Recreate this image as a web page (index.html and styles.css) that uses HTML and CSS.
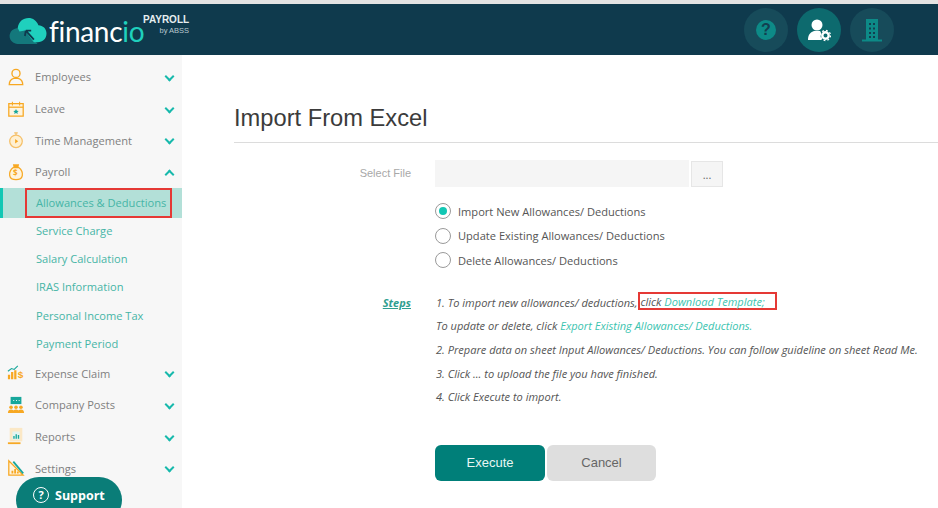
FILE: index.html
```html
<!DOCTYPE html>
<html lang="en">
<head>
    <meta charset="UTF-8">
    <title>Import From Excel</title>
    <link rel="stylesheet" href="styles.css">
</head>
<body>
    <!-- Header -->
    <header class="topbar">
        <div class="brand">
            <svg class="brand-cloud" width="39" height="27" viewBox="0 0 42 30">
                <path d="M11 29C4 29 0 25 0 20c0-5 4-9 10-9 5 0 9 2 13 7l8 11z" fill="#14787c"/>
                <path d="M9 11C10 4 15 0 21 0c5 0 9 3 11 8 5 0 9 4 9 9 0 6-4 10-10 10h-4L17 14l-6 1z" fill="#1fd0bd"/>
                <path d="M27 24 18 14M18 14l-1 6M18 14l6 0" stroke="#0f3a4d" stroke-width="2" fill="none"/>
            </svg>
            <span class="brand-name">financ<span>io</span></span>
            <div class="brand-sub"><strong>PAYROLL</strong><small>by ABSS</small></div>
        </div>
        <div class="top-icons">
            <div class="circle">
                <span class="help-badge">?</span>
            </div>
            <div class="circle active">
                <svg width="24" height="24" viewBox="0 0 24 24">
                    <circle cx="10" cy="7" r="5.5" fill="#fff"/>
                    <path d="M1 22c0-6 3-8 6-9h6c1 1 1 2 1 3-1 2 0 5 1 6z" fill="#fff"/>
                    <circle cx="18.5" cy="17.5" r="3.2" fill="none" stroke="#fff" stroke-width="2.4"/>
                    <circle cx="18.5" cy="17.5" r="5" fill="none" stroke="#fff" stroke-width="1.4" stroke-dasharray="1.8 2.1"/>
                </svg>
            </div>
            <div class="circle">
                <svg width="22" height="24" viewBox="0 0 22 24">
                    <path d="M5 1h12v21H5z" fill="#0d8a87"/>
                    <path d="M1 22.5h20" stroke="#0d8a87" stroke-width="2"/>
                    <path d="M8 5h2v2H8zM12 5h2v2h-2zM8 9.500h2v2H8zM12 9.500h2v2h-2zM8 14h2v2H8zM12 14h2v2h-2zM8 18h2v2H8zM12 18h2v2h-2z" fill="#123f50"/>
                </svg>
            </div>
        </div>
    </header>

    <div class="page">
        <!-- Sidebar -->
        <aside class="sidebar">
            <a class="menu-item">
                <svg class="menu-icon" viewBox="0 0 20 20"><circle cx="10" cy="6" r="4.500" fill="none" stroke="#f7a823" stroke-width="1.500"/><path d="M2.500 18.500c0-4 2-6 5-7h5c3 1 5 3 5 7z" fill="none" stroke="#f7a823" stroke-width="1.500"/></svg>
                <span>Employees</span><i class="chev"></i>
            </a>
            <a class="menu-item">
                <svg class="menu-icon" viewBox="0 0 20 20"><path d="M2 4h16v14H2z" fill="#fff4de" stroke="#f7a823" stroke-width="1.400"/><path d="M2 8h16" stroke="#f7a823" stroke-width="1.400"/><path d="M6 2v4M14 2v4" stroke="#f7a823" stroke-width="1.200"/><path d="M10 10l1 2 2 .2-1.500 1.300.5 2-2-1-2 1 .5-2L7 12.200l2-.2z" fill="#17a79b"/></svg>
                <span>Leave</span><i class="chev"></i>
            </a>
            <a class="menu-item">
                <svg class="menu-icon" viewBox="0 0 20 20"><circle cx="10" cy="11.500" r="7" fill="#fff0d2" stroke="#f5c069" stroke-width="1.400"/><path d="M8 2h4M10 2v2.500" stroke="#f5c069" stroke-width="1.500"/><path d="M9 9l3.500 2.500L9 14z" fill="#f7a823"/></svg>
                <span>Time Management</span><i class="chev"></i>
            </a>
            <a class="menu-item">
                <svg class="menu-icon" viewBox="0 0 20 20"><path d="M7 5C3 8 2.500 11 3 14c.5 3 3 4.500 7 4.500s6.500-1.500 7-4.500c.5-3 0-6-4-9z" fill="#fff4de" stroke="#f7a823" stroke-width="1.400"/><path d="M6.500 1.500h7L12.500 5h-5z" fill="#f7a823"/></svg>
                <b class="dollar">$</b>
                <span>Payroll</span><i class="chev up"></i>
            </a>
            <div class="sub-item current"><span class="marked">Allowances &amp; Deductions</span></div>
            <a class="sub-item">Service Charge</a>
            <a class="sub-item">Salary Calculation</a>
            <a class="sub-item">IRAS Information</a>
            <a class="sub-item">Personal Income Tax</a>
            <a class="sub-item">Payment Period</a>
            <a class="menu-item">
                <svg class="menu-icon" viewBox="0 0 20 20"><path d="M1 17h2.500v-5H1zM4.500 17H7V9H4.500zM8 17h2.500V7H8z" fill="#f7a823"/><path d="M1 8l4-3 3 1 4-4" stroke="#17a79b" stroke-width="1.200" fill="none"/><text x="12" y="16" class="icon-dollar">$</text></svg>
                <span>Expense Claim</span><i class="chev"></i>
            </a>
            <a class="menu-item">
                <svg class="menu-icon" viewBox="0 0 20 20"><path d="M4 1h12v8H4z" fill="#17a79b"/><path d="M7 5h1M10 5h1M13 5h1" stroke="#fff" stroke-width="1.200"/><circle cx="4.500" cy="12.500" r="2" fill="#f7a823"/><circle cx="10" cy="12.500" r="2" fill="#f7a823"/><circle cx="15.500" cy="12.500" r="2" fill="#f7a823"/><path d="M1 19c0-3 1.500-4 3.500-4S8 16 8 19zM6.500 19c0-3 1.500-4 3.500-4s3.500 1 3.500 4zM12 19c0-3 1.500-4 3.500-4s3.500 1 3.500 4z" fill="#f7a823"/></svg>
                <span>Company Posts</span><i class="chev"></i>
            </a>
            <a class="menu-item">
                <svg class="menu-icon" viewBox="0 0 20 20"><path d="M3 1h14v15H3z" fill="#fbe8c6"/><path d="M6 5h8v9H6z" fill="#e3f4f1"/><path d="M7 13v-3h1.500v3zM9.500 13V8H11v5zM12 13v-4h1.500v4z" fill="#17a79b"/><path d="M1 17h14v2H1z" fill="#f7a823"/></svg>
                <span>Reports</span><i class="chev"></i>
            </a>
            <a class="menu-item">
                <svg class="menu-icon" viewBox="0 0 20 20"><path d="M2 2v16h16z" fill="#fff4de" stroke="#f7a823" stroke-width="1.400"/><path d="M5 16v-3h2v3zM8 16v-5h2v5zM11 16v-2h2v2z" fill="#f7a823"/><path d="M7 3l11 13" stroke="#17a79b" stroke-width="2"/></svg>
                <span>Settings</span><i class="chev"></i>
            </a>
            <div class="support">
                <span class="support-icon">?</span>
                Support
            </div>
        </aside>

        <!-- Content -->
        <main class="content">
            <h1>Import From Excel</h1>
            <div class="form-row file-row">
                <label>Select File</label>
                <div class="file-box"></div>
                <button class="browse">...</button>
            </div>
            <div class="radios">
                <div class="radio-line"><i class="radio checked"></i>Import New Allowances/ Deductions</div>
                <div class="radio-line"><i class="radio"></i>Update Existing Allowances/ Deductions</div>
                <div class="radio-line"><i class="radio"></i>Delete Allowances/ Deductions</div>
            </div>
            <div class="form-row steps-row">
                <label class="steps-label">Steps</label>
                <div class="steps">
                    <p>1. To import new allowances/ deductions, <span class="marked-link">click <a>Download Template;</a></span></p>
                    <p>To update or delete, click <a>Export Existing Allowances/ Deductions.</a></p>
                    <p>2. Prepare data on sheet Input Allowances/ Deductions. You can follow guideline on sheet Read Me.</p>
                    <p>3. Click ... to upload the file you have finished.</p>
                    <p>4. Click Execute to import.</p>
                </div>
            </div>
            <div class="actions">
                <button class="btn btn-execute">Execute</button>
                <button class="btn btn-cancel">Cancel</button>
            </div>
        </main>
    </div>
</body>
</html>
```

FILE: styles.css
```css
* {
    margin: 0;
    padding: 0;
    box-sizing: border-box;
}

html, body {
    height: 508px;
    overflow: hidden;
}

body {
    font-family: "Open Sans", sans-serif;
    font-size: 11.1px;
    background-color: #ffffff;
    color: #555;
    border-top: 4px solid #e3e3e3;
}

/* Header */
.topbar {
    height: 51px;
    background-color: #0f3a4d;
    display: flex;
    justify-content: space-between;
    align-items: center;
    padding: 0 44px 0 9px;
}

.brand {
    display: flex;
    align-items: flex-start;
    position: relative;
    width: 190px;
    height: 51px;
}

.brand-cloud {
    margin-top: 14px;
}

.brand-name {
    font-family: "Lato", sans-serif;
    font-size: 28px;
    line-height: 30px;
    color: #ffffff;
    margin-top: 12px;
    margin-left: 1px;
    letter-spacing: -0.3px;
}

.brand-name span {
    color: #1fd0bd;
}

.brand-sub {
    display: flex;
    flex-direction: column;
    align-items: flex-end;
    font-family: "Liberation Sans", sans-serif;
    color: #e6eef0;
    margin-top: 10px;
    margin-left: 1px;
    position: absolute;
    left: 133px;
    top: 0;
}

.brand-sub strong {
    font-size: 10px;
    line-height: 11px;
}

.brand-sub small {
    font-size: 7.5px;
    line-height: 11px;
    color: #b9c8ce;
}

.top-icons {
    display: flex;
    gap: 9px;
}

.circle {
    width: 44px;
    height: 44px;
    border-radius: 50%;
    background-color: #174b5a;
    display: flex;
    align-items: center;
    justify-content: center;
}

.circle.active {
    background-color: #0d6a6e;
}

.help-badge {
    width: 20px;
    height: 20px;
    border-radius: 50%;
    background-color: #0d8a87;
    color: #123f50;
    font-family: "Liberation Sans", sans-serif;
    font-weight: bold;
    font-size: 16px;
    line-height: 20px;
    text-align: center;
}

.page {
    display: flex;
    height: 453px;
}

/* Sidebar */
.sidebar {
    width: 182px;
    flex-shrink: 0;
    background-color: #f7f7f7;
    padding-top: 6px;
    position: relative;
    color: #808080;
}

.menu-item {
    display: flex;
    align-items: center;
    height: 31.7px;
    padding-left: 7px;
    position: relative;
}

.menu-icon {
    width: 18px;
    height: 18px;
    margin-right: 10px;
    flex-shrink: 0;
}

.dollar {
    position: absolute;
    left: 13px;
    top: 11px;
    font-size: 8px;
    color: #f7a823;
}

.icon-dollar {
    font-family: "Liberation Sans", sans-serif;
    font-weight: bold;
    font-size: 11px;
    fill: #f7a823;
}

.chev {
    position: absolute;
    right: 9px;
    top: 12px;
    width: 7px;
    height: 7px;
    border-right: 2px solid #17b9ac;
    border-bottom: 2px solid #17b9ac;
    transform: rotate(45deg);
}

.chev.up {
    top: 15px;
    transform: rotate(225deg);
}

.sub-item {
    display: flex;
    align-items: center;
    height: 28.1px;
    padding-left: 36px;
    color: #46b5a6;
}

.sub-item.current {
    height: 30px;
    margin-bottom: -1px;
    background-color: #b3e0d8;
    border-left: 3px solid #12c7b4;
    padding-left: 22px;
}

.marked {
    display: block;
    width: 147px;
    height: 30px;
    line-height: 26px;
    padding-left: 9px;
    border: 2px solid #e53935;
    white-space: nowrap;
}

.support {
    position: absolute;
    left: 16px;
    top: 422px;
    width: 106px;
    height: 46px;
    border-radius: 23px;
    background-color: #0a7d78;
    color: #ffffff;
    font-weight: bold;
    font-size: 12.500px;
    display: flex;
    align-items: flex-start;
    padding: 9px 0 0 17px;
    gap: 6px;
    line-height: 19px;
}

.support-icon {
    width: 16px;
    height: 16px;
    margin-top: 1px;
    border: 1.500px solid #ffffff;
    border-radius: 50%;
    font-size: 11px;
    line-height: 13px;
    text-align: center;
}

/* Content */
.content {
    flex: 1;
    padding: 0 0 0 52px;
}

h1 {
    font-family: "Liberation Sans", sans-serif;
    font-weight: normal;
    font-size: 23.7px;
    line-height: 30px;
    color: #3b3b3b;
    margin-top: 48px;
    padding-bottom: 9px;
    border-bottom: 1px solid #dcdcdc;
}

.form-row {
    display: flex;
}

.form-row label {
    width: 177px;
    text-align: right;
    font-family: "Liberation Sans", sans-serif;
    font-size: 11px;
    color: #a8a8a8;
    flex-shrink: 0;
    padding-bottom: 2px;
}

.file-row {
    margin-top: 17px;
    align-items: center;
    height: 27px;
}

.file-box {
    width: 254px;
    height: 27px;
    background-color: #f5f5f5;
    margin-left: 24px;
}

.browse {
    width: 32px;
    height: 26px;
    margin-left: 2px;
    margin-top: 1px;
    background-color: #f5f5f5;
    border: 1px solid #e6e6e6;
    font-family: "Open Sans", sans-serif;
    font-size: 11px;
    color: #666;
}

.radios {
    margin-top: 12px;
    margin-left: 201px;
}

.radio-line {
    display: flex;
    align-items: center;
    height: 24.500px;
    color: #555;
}

.radio {
    width: 16px;
    height: 16px;
    border: 1px solid #9a9a9a;
    border-radius: 50%;
    margin-right: 7px;
    background-color: #fff;
    display: flex;
    align-items: center;
    justify-content: center;
}

.radio.checked::after {
    content: "";
    width: 8px;
    height: 8px;
    border-radius: 50%;
    background-color: #12c7b4;
}

.steps-row {
    margin-top: 18px;
}

.steps-row .steps-label {
    width: 177px;
    margin-right: 25px;
    padding-bottom: 0;
    font-family: "Open Sans", sans-serif;
    font-size: 11px;
    font-style: italic;
    font-weight: bold;
    color: #2f9e8f;
    text-decoration: underline;
    line-height: 23.700px;
}

.steps p {
    font-style: italic;
    font-size: 11.05px;
    line-height: 23.700px;
    color: #555;
    white-space: nowrap;
}

.steps a {
    color: #3cc4b0;
}

.marked-link {
    display: inline-block;
    width: 139px;
    height: 18px;
    line-height: 15px;
    border: 2px solid #e53935;
    margin-left: -2px;
    vertical-align: 1px;
}

.actions {
    display: flex;
    gap: 2px;
    margin-top: 36px;
    margin-left: 201px;
}

.btn {
    width: 110px;
    height: 36px;
    border: none;
    border-radius: 6px;
    padding-bottom: 2px;
    font-family: "Liberation Sans", sans-serif;
    font-size: 13px;
}

.btn-execute {
    background-color: #007f79;
    color: #e8f6f4;
}

.btn-cancel {
    width: 109px;
    background-color: #dedede;
    color: #666;
}
```
